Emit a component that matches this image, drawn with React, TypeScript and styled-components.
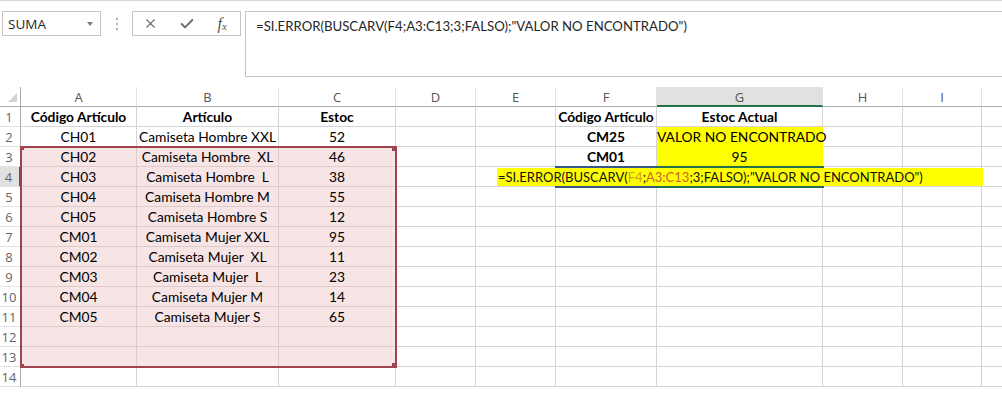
import React from 'react';
import styled, { createGlobalStyle } from 'styled-components';
import { X, Check } from 'lucide-react';

const GlobalStyle = createGlobalStyle`
  html, body {
    margin: 0;
    padding: 0;
    background: #fff;
  }
  body {
    font-family: 'Lato', 'Liberation Sans', sans-serif;
  }
`;

const CELL_FONT = `'Lato', 'Liberation Sans', sans-serif`;
const UI_FONT = `'Open Sans', 'Liberation Sans', sans-serif`;

const Page = styled.div`
  width: 1002px;
  height: 393px;
  overflow: hidden;
  background: #fff;
  border-top: 1px solid #d6d6d6;
  box-sizing: border-box;
`;

const FormulaBar = styled.div`
  display: flex;
  align-items: flex-start;
  padding: 10px 0 10px 2px;
`;

const NameBox = styled.div`
  width: 99px;
  height: 25px;
  box-sizing: border-box;
  border: 1px solid #c6c6c6;
  display: flex;
  align-items: center;
  justify-content: space-between;
  padding: 0 6px 0 5px;
  font-family: ${UI_FONT};
  font-size: 13.5px;
  color: #262626;
`;

const DropArrow = styled.span`
  width: 0;
  height: 0;
  border-left: 3.5px solid transparent;
  border-right: 3.5px solid transparent;
  border-top: 4px solid #7a7a7a;
  margin-right: 1px;
`;

const Splitter = styled.div`
  width: 31px;
  height: 25px;
  display: flex;
  flex-direction: column;
  align-items: center;
  justify-content: center;
  gap: 3px;
`;

const Dot = styled.span`
  width: 2px;
  height: 2px;
  background: #b0b0b0;
`;

const ButtonGroup = styled.div`
  width: 109px;
  height: 25px;
  box-sizing: border-box;
  border: 1px solid #c6c6c6;
  display: flex;
  align-items: center;
`;

const BarButton = styled.span`
  flex: 1;
  display: flex;
  align-items: center;
  justify-content: center;
  color: #6a6a6a;
`;

const FxLabel = styled.span`
  font-family: 'Liberation Serif', serif;
  font-style: italic;
  font-size: 16px;
  color: #555;
  sub {
    font-size: 11px;
    vertical-align: -1px;
  }
`;

const FormulaInput = styled.div`
  flex: 1;
  margin-left: 4px;
  height: 66px;
  box-sizing: border-box;
  border: 1px solid #c6c6c6;
  border-right: none;
  padding: 4px 10px;
  font-family: ${CELL_FONT};
  font-size: 13.2px;
  line-height: 20px;
  color: #262626;
  white-space: pre;
`;

const Sheet = styled.div`
  display: grid;
  grid-template-columns: 21px 116px 142px 117px 80px 80px 101px 166px 80px 79px 60px;
  grid-template-rows: repeat(15, 20px);
`;

const Corner = styled.div`
  grid-row: 1;
  grid-column: 1;
  box-sizing: border-box;
  border-right: 1px solid #ababab;
  border-bottom: 1px solid #ababab;
  display: flex;
  align-items: flex-end;
  justify-content: flex-end;
  padding: 0 3px 4px 0;
`;

const ColHead = styled.div<{ $c: number; $active?: boolean }>`
  grid-row: 1;
  grid-column: ${(p) => p.$c};
  box-sizing: border-box;
  border-right: 1px solid #e2e2e2;
  border-bottom: ${(p) => (p.$active ? '2px solid #217346' : '1px solid #ababab')};
  background: ${(p) => (p.$active ? '#e1e1e1' : '#fff')};
  font-family: ${UI_FONT};
  font-size: 13px;
  line-height: 20px;
  color: #555;
  text-align: center;
`;

const RowHead = styled.div<{ $r: number; $active?: boolean }>`
  grid-row: ${(p) => p.$r};
  grid-column: 1;
  box-sizing: border-box;
  border-right: ${(p) => (p.$active ? '2px solid #217346' : '1px solid #ababab')};
  border-bottom: 1px solid #e2e2e2;
  background: ${(p) => (p.$active ? '#e1e1e1' : '#fff')};
  font-family: ${UI_FONT};
  font-size: 13px;
  line-height: 20px;
  color: #666;
  text-align: center;
  padding-right: 2px;
`;

type Fill = 'none' | 'pink' | 'yellow';

const fillBg: Record<Fill, string> = {
  none: 'transparent',
  pink: '#f7e4e4',
  yellow: '#ffff00',
};

const fillLine: Record<Fill, string> = {
  none: '#d4d4d4',
  pink: '#dfcaca',
  yellow: '#ffff00',
};

const Cell = styled.div<{ $r: number; $c: number; $bold?: boolean; $fill: Fill }>`
  grid-row: ${(p) => p.$r};
  grid-column: ${(p) => p.$c};
  box-sizing: border-box;
  border-right: 1px solid ${(p) => fillLine[p.$fill]};
  border-bottom: 1px solid ${(p) => fillLine[p.$fill]};
  background: ${(p) => fillBg[p.$fill]};
  font-family: ${CELL_FONT};
  font-size: 13.8px;
  font-weight: ${(p) => (p.$bold ? 700 : 400)};
  line-height: 20px;
  color: #000;
  text-align: center;
  white-space: pre;
`;

const Selection = styled.div`
  grid-row: 4 / 15;
  grid-column: 2 / 5;
  margin: -1px;
  box-sizing: border-box;
  border: 2px solid #a0434f;
  position: relative;
  z-index: 2;
`;

const Handle = styled.span<{ $x: 'l' | 'r'; $y: 't' | 'b'; $color: string; $size: number }>`
  position: absolute;
  width: ${(p) => p.$size}px;
  height: ${(p) => p.$size}px;
  background: ${(p) => p.$color};
  ${(p) => (p.$x === 'l' ? 'left' : 'right')}: ${(p) => -Math.ceil(p.$size / 2) + 1}px;
  ${(p) => (p.$y === 't' ? 'top' : 'bottom')}: ${(p) => -Math.ceil(p.$size / 2) + 1}px;
`;

const RefBox = styled.div<{ $c: number; $color: string }>`
  grid-row: 5;
  grid-column: ${(p) => p.$c};
  margin: -1px;
  box-sizing: border-box;
  border: 2px solid ${(p) => p.$color};
  position: relative;
  z-index: 1;
`;

const Editor = styled.div`
  grid-row: 5;
  grid-column: 6 / 11;
  margin: 1px -1px 1px 21px;
  background: #ffff00;
  z-index: 3;
  font-family: ${CELL_FONT};
  font-size: 13px;
  line-height: 18px;
  color: #111;
  white-space: pre;
  padding-left: 1px;
`;

const RefText = styled.span<{ $color: string }>`
  color: ${(p) => p.$color};
`;

const COLS = ['A', 'B', 'C', 'D', 'E', 'F', 'G', 'H', 'I', ''];

// row -> [A..J]
const DATA: Record<number, string[]> = {
  1: ['Código Artículo', 'Artículo', 'Estoc', '', '', 'Código Artículo', 'Estoc Actual'],
  2: ['CH01', 'Camiseta Hombre XXL', '52', '', '', 'CM25', 'VALOR NO ENCONTRADO'],
  3: ['CH02', 'Camiseta Hombre  XL', '46', '', '', 'CM01', '95'],
  4: ['CH03', 'Camiseta Hombre  L', '38'],
  5: ['CH04', 'Camiseta Hombre M', '55'],
  6: ['CH05', 'Camiseta Hombre S', '12'],
  7: ['CM01', 'Camiseta Mujer XXL', '95'],
  8: ['CM02', 'Camiseta Mujer  XL', '11'],
  9: ['CM03', 'Camiseta Mujer  L', '23'],
  10: ['CM04', 'Camiseta Mujer M', '14'],
  11: ['CM05', 'Camiseta Mujer S', '65'],
};

const ROWS = Array.from({ length: 14 }, (_, i) => i + 1);

const isBold = (r: number, ci: number) => r === 1 || (ci === 5 && (r === 2 || r === 3));

const fillOf = (r: number, ci: number): Fill => {
  if (r >= 3 && r <= 13 && ci <= 2) return 'pink';
  if (ci === 6 && (r === 2 || r === 3)) return 'yellow';
  return 'none';
};

function App() {
  return (
    <Page>
      <GlobalStyle />
      <FormulaBar>
        <NameBox>
          SUMA
          <DropArrow />
        </NameBox>
        <Splitter>
          <Dot />
          <Dot />
          <Dot />
        </Splitter>
        <ButtonGroup>
          <BarButton>
            <X size={15} strokeWidth={1.7} />
          </BarButton>
          <BarButton>
            <Check size={16} strokeWidth={2.8} />
          </BarButton>
          <BarButton>
            <FxLabel>
              f<sub>x</sub>
            </FxLabel>
          </BarButton>
        </ButtonGroup>
        <FormulaInput>=SI.ERROR(BUSCARV(F4;A3:C13;3;FALSO);"VALOR NO ENCONTRADO")</FormulaInput>
      </FormulaBar>

      <Sheet>
        <Corner>
          <svg width="9" height="9" viewBox="0 0 9 9">
            <polygon points="9,0 9,9 0,9" fill="#d3d3d3" />
          </svg>
        </Corner>
        {COLS.map((c, ci) => (
          <ColHead key={ci} $c={ci + 2} $active={c === 'G'}>
            {c}
          </ColHead>
        ))}
        {ROWS.map((r) => (
          <React.Fragment key={r}>
            <RowHead $r={r + 1} $active={r === 4}>
              {r}
            </RowHead>
            {COLS.map((_, ci) => (
              <Cell key={ci} $r={r + 1} $c={ci + 2} $bold={isBold(r, ci)} $fill={fillOf(r, ci)}>
                {DATA[r]?.[ci] ?? ''}
              </Cell>
            ))}
          </React.Fragment>
        ))}

        <Selection>
          <Handle $x="l" $y="t" $color="#a0434f" $size={3} />
          <Handle $x="r" $y="t" $color="#a0434f" $size={5} />
          <Handle $x="l" $y="b" $color="#a0434f" $size={3} />
          <Handle $x="r" $y="b" $color="#a0434f" $size={5} />
        </Selection>

        <RefBox $c={7} $color="#35578a">
          <Handle $x="l" $y="t" $color="#35578a" $size={4} />
          <Handle $x="l" $y="b" $color="#35578a" $size={4} />
        </RefBox>
        <RefBox $c={8} $color="#217346">
          <Handle $x="l" $y="t" $color="#35578a" $size={4} />
          <Handle $x="l" $y="b" $color="#35578a" $size={4} />
          <Handle $x="r" $y="t" $color="#35578a" $size={4} />
          <Handle $x="r" $y="b" $color="#35578a" $size={4} />
        </RefBox>

        <Editor>
          =SI.ERROR(BUSCARV(<RefText $color="#d39a2e">F4</RefText>;
          <RefText $color="#c9672c">A3:C13</RefText>;3;FALSO);"VALOR NO ENCONTRADO")
        </Editor>
      </Sheet>
    </Page>
  );
}

export default App;
